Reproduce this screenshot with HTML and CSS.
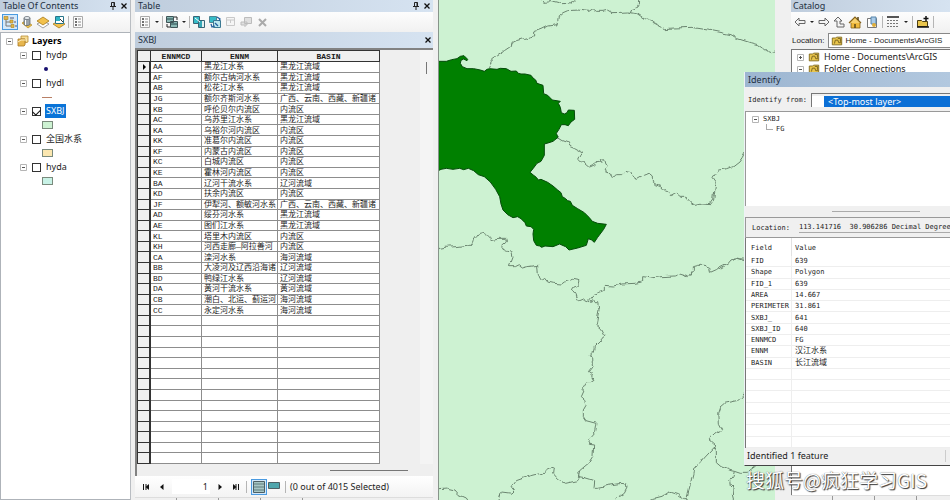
FILE: index.html
```html
<!DOCTYPE html>
<html lang="zh-CN">
<head>
<meta charset="utf-8">
<title>ArcMap</title>
<link rel="stylesheet" href="styles.css">
</head>
<body>
<svg class="defs" aria-hidden="true">
  <filter id="rough" x="0" y="0" width="100%" height="100%"><feTurbulence type="fractalNoise" baseFrequency=".04" numOctaves="2" seed="4"/><feDisplacementMap in="SourceGraphic" scale="16" xChannelSelector="R" yChannelSelector="G"/></filter>
  <symbol id="i-pin" viewBox="0 0 8 8"><path d="M2.5 .5h3v4h-3zM1 4.5h6M4 4.5V8M5 .5v4" fill="none" stroke="#222"/></symbol>
  <symbol id="i-x" viewBox="0 0 8 8"><path d="M1.5 1.5l5 5M6.500 1.500l-5 5" fill="none" stroke="#111" stroke-width="1.300"/></symbol>
  <symbol id="i-tree" viewBox="0 0 14 14"><path d="M3 4v7h5M3 7h5" fill="none" stroke="#777"/><path d="M1 1.500h4v3H1zM7 5h3v3H7zM8 9.500h3v3H8z" fill="#e3b444" stroke="#a98324" stroke-width=".6"/><path d="M7 3h4M11 7h2M12 11h2" stroke="#557"/></symbol>
  <symbol id="i-db" viewBox="0 0 14 14"><path d="M2 8l3-2 7 4-4 3z" fill="#efc34a" stroke="#b98d25" stroke-width=".7"/><path d="M4 3v6c0 2 6 2 6 0V3z" fill="#9aa3ab" stroke="#555d66" stroke-width=".7"/><ellipse cx="7" cy="3" rx="3" ry="1.500" fill="#e8edf1" stroke="#555d66" stroke-width=".7"/><path d="M5.500 5v5" stroke="#fff"/></symbol>
  <symbol id="i-diamond" viewBox="0 0 14 14"><path d="M1 9l6-3 6 3-6 4z" fill="#fff" stroke="#888" stroke-width=".8"/><path d="M1 6l6-4 6 4-6 4z" fill="#f2c14c" stroke="#a77a1c" stroke-width=".8"/></symbol>
  <symbol id="i-select" viewBox="0 0 14 14"><path d="M1 9l6-3 6 3-6 4z" fill="#f2c14c" stroke="#a77a1c" stroke-width=".8"/><path d="M3.500 1.500h8v7h-8z" fill="#fff" stroke="#28758a"/><path d="M4 2h4v4H4z" fill="#2fb3c4"/><path d="M8 4l3 3" stroke="#333"/></symbol>
  <symbol id="i-list" viewBox="0 0 14 14"><path d="M2.500 1.500h9v11h-9z" fill="#fbfbfb" stroke="#aaa"/><path d="M4 4h2M4 7h2M4 10h2" stroke="#444" stroke-width="1.500"/><path d="M7 4h3M7 7h3M7 10h3" stroke="#888"/></symbol>
  <symbol id="i-related" viewBox="0 0 14 14"><path d="M1.500 1.500h7v6h-7zM5.500 6.500h7v6h-7z" fill="#8ab9b5" stroke="#3f5558"/><path d="M2 4h6M6 9h6" stroke="#27464a"/><path d="M9 2h3v3M5 12H2V9" fill="none" stroke="#222"/></symbol>
  <symbol id="i-attr" viewBox="0 0 14 14"><path d="M1.500 1.500h6v7h-6z" fill="#36bcc8" stroke="#376476"/><path d="M6.500 5.500h6v7h-6z" fill="#e4f1f2" stroke="#376476"/><path d="M7 6h3v6H7z" fill="#36a9b8"/><path d="M3 3l5 4" stroke="#fff"/></symbol>
  <symbol id="i-switch" viewBox="0 0 14 14"><path d="M1.500 1.500h7v6h-7z" fill="#36bcc8" stroke="#4f8593"/><path d="M5.500 5.500h7v7h-7z" fill="#bde8ef" stroke="#3c7992"/><path d="M9 2l3 2-1 2M3 9l1 3 3-1M7 8l3 3" fill="none" stroke="#235fa0" stroke-width="1.300"/></symbol>
  <symbol id="i-clear" viewBox="0 0 14 14"><path d="M2.500 2.500h8v8h-8zM3 5h7M6.500 5v3" fill="#f5f5f5" stroke="#c9c9c9"/></symbol>
  <symbol id="i-zoomsel" viewBox="0 0 14 14"><path d="M4.500 2.500h7v6h-7zM1 7h6v3H1zM5 10v2" fill="#e0e0e0" stroke="#bcbcbc"/></symbol>
  <symbol id="i-del" viewBox="0 0 14 14"><path d="M3 4l7 7M10 4l-7 7" stroke="#aaa" stroke-width="2"/></symbol>
  <symbol id="i-first" viewBox="0 0 8 8"><path d="M1.500 1v6M4 1v6" stroke="#111"/><path d="M7 1v6L3.500 4z" fill="#111"/></symbol>
  <symbol id="i-prev" viewBox="0 0 8 8"><path d="M5.500 1v6L2 4z" fill="#111"/></symbol>
  <symbol id="i-all" viewBox="0 0 14 14"><path d="M1.500 1.500h11v11h-11z" fill="#a8c7c6" stroke="#4d6065"/><path d="M2 4h10M2 7h10M2 10h10" stroke="#5e7c7e"/></symbol>
  <symbol id="i-sel" viewBox="0 0 14 14"><path d="M1.500 2.500h11v6h-11z" fill="#4fa6ad" stroke="#4d6065"/></symbol>
  <symbol id="i-back" viewBox="0 0 12 12"><path d="M1 6l4-4v2.500h6v3H5V10z" fill="#f4f4f4" stroke="#666"/></symbol>
  <symbol id="i-up" viewBox="0 0 12 12"><path d="M5 1l4 4H7v3h4v3H4V5H1z" fill="#f4f4f4" stroke="#666"/></symbol>
  <symbol id="i-home" viewBox="0 0 14 14"><path d="M3 7h9v6H3z" fill="#efb93c" stroke="#84611a" stroke-width=".8"/><path d="M1 8l6-6 6 6" fill="#f6d06e" stroke="#84611a" stroke-width="1.200"/><path d="M10 2v3M7 9v4" stroke="#5b4515" stroke-width="1.500"/></symbol>
  <symbol id="i-doc" viewBox="0 0 14 14"><path d="M2.500 3.500h9v9h-9z" fill="#fff" stroke="#777"/><path d="M6 4V2h5v7H6z" fill="#a9cbe9" stroke="#5784aa"/><circle cx="9" cy="10" r="2" fill="#dfae39"/></symbol>
  <symbol id="i-grid" viewBox="0 0 14 14"><path d="M1 2h12" stroke="#555" stroke-width="2"/><path d="M1 5.500h12M1 8.500h12M1 11.500h12" stroke="#777" stroke-dasharray="2 1"/></symbol>
  <symbol id="i-folder" viewBox="0 0 14 12"><path d="M1.500 2.500h4l1-1h6v9h-11z" fill="#e9c54c" stroke="#7b6316"/><path d="M4 9l1-4h3l1 3h3M8 3h3v4" fill="none" stroke="#6c5818"/></symbol>
  <symbol id="i-connect" viewBox="0 0 14 12"><path d="M1.500 4.500h4l1 1h5v5h-10z" fill="#e9c54c" stroke="#4d3f11"/><path d="M10 0v5M7.500 2.500h5M1 11h12" stroke="#111" stroke-width="1.500"/></symbol>
  <symbol id="i-layers" viewBox="0 0 12 12"><path d="M4 1h7v6l-3 1V4H4z" fill="#f7dc92" stroke="#b78a33" stroke-width=".8"/><path d="M1 4h7v6l-1 1H1z" fill="#e7b64e" stroke="#a97925" stroke-width=".8"/><path d="M1 7l3-2h6" fill="none" stroke="#fff1c8"/></symbol>
  <symbol id="i-minus" viewBox="0 0 7 7"><path d="M.5.5h6v6h-6z" fill="#fff" stroke="#b5b5b5"/><path d="M2 3.500h3" stroke="#555"/></symbol>
  <symbol id="i-plus" viewBox="0 0 7 7"><path d="M.5.5h6v6h-6z" fill="#fff" stroke="#b5b5b5"/><path d="M2 3.500h3M3.500 2v3" stroke="#555"/></symbol>
</svg>

<main class="workspace">
  <aside class="toc">
    <header class="title"><h2>Table Of Contents</h2><button aria-label="Auto hide"><svg class="i8"><use href="#i-pin"/></svg></button><button aria-label="Close"><svg class="i8"><use href="#i-x"/></svg></button></header>
    <div class="toolbar">
      <button class="active" aria-label="List by drawing order"><svg class="i14"><use href="#i-tree"/></svg></button>
      <button aria-label="List by source"><svg class="i14"><use href="#i-db"/></svg></button>
      <button aria-label="List by visibility"><svg class="i14"><use href="#i-diamond"/></svg></button>
      <button aria-label="List by selection"><svg class="i14"><use href="#i-select"/></svg></button>
      <i class="sep"></i>
      <button aria-label="Options"><svg class="i14"><use href="#i-list"/></svg></button>
    </div>
    <div class="tree">
      <div class="root"><svg class="i7"><use href="#i-minus"/></svg><svg class="i12"><use href="#i-layers"/></svg><b>Layers</b></div>
      <ul>
        <li><div class="layer"><svg class="i7"><use href="#i-minus"/></svg><input type="checkbox" id="l1"><label for="l1">hydp</label></div><span class="sym point"></span></li>
        <li><div class="layer"><svg class="i7"><use href="#i-minus"/></svg><input type="checkbox" id="l2"><label for="l2">hydl</label></div><span class="sym line"></span></li>
        <li><div class="layer"><svg class="i7"><use href="#i-minus"/></svg><input type="checkbox" id="l3" checked><label for="l3" class="selected">SXBJ</label></div><span class="sym green"></span></li>
        <li><div class="layer"><svg class="i7"><use href="#i-minus"/></svg><input type="checkbox" id="l4"><label for="l4">全国水系</label></div><span class="sym yellow"></span></li>
        <li><div class="layer"><svg class="i7"><use href="#i-minus"/></svg><input type="checkbox" id="l5"><label for="l5">hyda</label></div><span class="sym cyan"></span></li>
      </ul>
    </div>
  </aside>

  <section class="attributes">
    <header class="title"><h2>Table</h2><button aria-label="Auto hide"><svg class="i8"><use href="#i-pin"/></svg></button><button aria-label="Close"><svg class="i8"><use href="#i-x"/></svg></button></header>
    <div class="toolbar">
      <button aria-label="Table options"><svg class="i14"><use href="#i-list"/></svg></button><i class="drop"></i><i class="sep"></i>
      <button aria-label="Related tables"><svg class="i14"><use href="#i-related"/></svg></button><i class="drop"></i><i class="sep"></i>
      <button aria-label="Select by attributes"><svg class="i14"><use href="#i-attr"/></svg></button>
      <button aria-label="Switch selection"><svg class="i14"><use href="#i-switch"/></svg></button>
      <button aria-label="Clear selection" disabled><svg class="i14"><use href="#i-clear"/></svg></button>
      <button aria-label="Zoom to selected" disabled><svg class="i14"><use href="#i-zoomsel"/></svg></button>
      <button aria-label="Delete selected" disabled><svg class="i14"><use href="#i-del"/></svg></button>
    </div>
    <header class="title sub"><h2>SXBJ</h2><button aria-label="Close SXBJ"><svg class="i8"><use href="#i-x"/></svg></button></header>
    <div class="sheet">
      <div class="sheet-table">
        <table class="records">
          <colgroup><col class="c0"><col class="c1"><col class="c2"><col class="c3"></colgroup>
          <thead><tr><th></th><th>ENNMCD</th><th>ENNM</th><th>BASIN</th></tr></thead>
          <tbody>
            <tr><th class="current"></th><td>AA</td><td>黑龙江水系</td><td>黑龙江流域</td></tr>
            <tr><th></th><td>AF</td><td>额尔古纳河水系</td><td>黑龙江流域</td></tr>
            <tr><th></th><td>AB</td><td>松花江水系</td><td>黑龙江流域</td></tr>
            <tr><th></th><td>JG</td><td>额尔齐斯河水系</td><td>广西、云南、西藏、新疆诸</td></tr>
            <tr><th></th><td>KB</td><td>呼伦贝尔内流区</td><td>内流区</td></tr>
            <tr><th></th><td>AC</td><td>乌苏里江水系</td><td>黑龙江流域</td></tr>
            <tr><th></th><td>KA</td><td>乌裕尔河内流区</td><td>内流区</td></tr>
            <tr><th></th><td>KK</td><td>准葛尔内流区</td><td>内流区</td></tr>
            <tr><th></th><td>KF</td><td>内蒙古内流区</td><td>内流区</td></tr>
            <tr><th></th><td>KC</td><td>白城内流区</td><td>内流区</td></tr>
            <tr><th></th><td>KE</td><td>霍林河内流区</td><td>内流区</td></tr>
            <tr><th></th><td>BA</td><td>辽河干流水系</td><td>辽河流域</td></tr>
            <tr><th></th><td>KD</td><td>扶余内流区</td><td>内流区</td></tr>
            <tr><th></th><td>JF</td><td>伊犁河、额敏河水系</td><td>广西、云南、西藏、新疆诸</td></tr>
            <tr><th></th><td>AD</td><td>绥芬河水系</td><td>黑龙江流域</td></tr>
            <tr><th></th><td>AE</td><td>图们江水系</td><td>黑龙江流域</td></tr>
            <tr><th></th><td>KL</td><td>塔里木内流区</td><td>内流区</td></tr>
            <tr><th></th><td>KH</td><td>河西走廊—阿拉善河</td><td>内流区</td></tr>
            <tr><th></th><td>CA</td><td>滦河水系</td><td>海河流域</td></tr>
            <tr><th></th><td>BB</td><td>大凌河及辽西沿海诸</td><td>辽河流域</td></tr>
            <tr><th></th><td>BD</td><td>鸭绿江水系</td><td>辽河流域</td></tr>
            <tr><th></th><td>DA</td><td>黄河干流水系</td><td>黄河流域</td></tr>
            <tr><th></th><td>CB</td><td>潮白、北运、蓟运河</td><td>海河流域</td></tr>
            <tr><th></th><td>CC</td><td>永定河水系</td><td>海河流域</td></tr>
            <tr><th></th><td></td><td></td><td></td></tr>
            <tr><th></th><td></td><td></td><td></td></tr>
            <tr><th></th><td></td><td></td><td></td></tr>
            <tr><th></th><td></td><td></td><td></td></tr>
            <tr><th></th><td></td><td></td><td></td></tr>
            <tr><th></th><td></td><td></td><td></td></tr>
            <tr><th></th><td></td><td></td><td></td></tr>
            <tr><th></th><td></td><td></td><td></td></tr>
            <tr><th></th><td></td><td></td><td></td></tr>
            <tr><th></th><td></td><td></td><td></td></tr>
            <tr><th></th><td></td><td></td><td></td></tr>
            <tr><th></th><td></td><td></td><td></td></tr>
            <tr><th></th><td></td><td></td><td></td></tr>
            <tr><th></th><td></td><td></td><td></td></tr>
          </tbody>
        </table>
      </div>
      <div class="vscroll"><i></i></div>
      <div class="hscroll"><i></i></div>
    </div>
    <footer class="nav">
      <button aria-label="First record"><svg class="i8"><use href="#i-first"/></svg></button>
      <button aria-label="Previous record"><svg class="i8"><use href="#i-prev"/></svg></button>
      <input type="text" value="1" aria-label="Record number">
      <button class="flip" aria-label="Next record"><svg class="i8"><use href="#i-prev"/></svg></button>
      <button class="flip" aria-label="Last record"><svg class="i8"><use href="#i-first"/></svg></button>
      <i class="sep"></i>
      <span class="views">
        <button class="active" aria-label="Show all records"><svg class="i14"><use href="#i-all"/></svg></button>
        <button aria-label="Show selected records"><svg class="i14"><use href="#i-sel"/></svg></button>
      </span>
      <i class="sep"></i>
      <span>(0 out of 4015 Selected)</span>
    </footer>
    <div class="tabs"><i></i><i></i><i></i><i></i></div>
  </section>

  <section class="map" aria-label="Map">
    <svg viewBox="24 0 1011 1500" preserveAspectRatio="xMinYMin slice">
      <g class="bounds" filter="url(#rough)">
        <path d="M333 0 338 7 360 5 378 9 396 14 412 13 424 8 434 0M623 0 622 14 616 24 604 28 596 33 600 40"/>
        <path d="M175 205 184 184 182 176 200 164 220 152 238 140 240 130 256 122 290 112 308 108 308 96 330 88 350 78 378 74 382 50 396 38 410 32 440 30 474 34 486 26 496 34 516 34 532 30 546 38 590 36 598 38 620 42 640 56 664 66 700 86 730 84 780 82 830 90 900 104 920 116 958 128 980 134 1004 152 1018 158 1035 152"/>
        <path d="M380 412 396 422 412 428 416 438 434 446 452 456 446 464 440 478 450 488 460 490 474 502 492 494 498 488 510 486 508 478 518 476 522 490 532 496 526 508 530 522 544 532 560 524 572 524 580 514 602 518 610 534 620 538 640 526 654 520 664 528 664 544 676 554 692 560 702 572 712 576 718 590 736 580 750 592 766 592 778 606 792 616 810 612 838 614 848 600 850 580 856 546 846 532 862 510 890 506 906 500 924 486 934 472 940 460 944 452"/>
        <path d="M24 746 50 741 74 740 106 736 122 736 126 722 140 702 152 699 166 702 176 712 180 722 204 718 224 718 226 726 214 736 212 748 226 754 242 756 246 772 240 788 235 800 250 800 262 794 274 804 290 800 304 798 320 796 322 828 328 838 340 834 350 846 368 850 392 852 400 846 408 844 424 838 444 842 440 856 428 862 424 870 432 880 438 898 446 902 456 898 462 904 470 900 476 904 484 898 490 908 500 908 504 930 500 950 496 972 512 986 522 1005 508 1022 490 1040 486 1058 478 1066 486 1080 480 1092 486 1100 472 1118 482 1124 486 1138 468 1150 458 1168 448 1190 464 1204 468 1216 460 1230 460 1250 468 1262 498 1270 494 1294 480 1310 472 1330 488 1332 486 1368 472 1390 446 1412 442 1430"/>
        <path d="M473 900 486 884 520 872 520 856 544 858 570 852 612 850 632 846 632 830 666 834 690 830 730 828 746 822 772 830 784 812 784 800 800 796 822 796 836 802 838 820 856 812 870 802 890 792 900 780 914 774 940 782 950 780"/>
        <path d="M24 1466 46 1464 72 1470 84 1484 106 1494 110 1500M204 1500 212 1476 242 1480 250 1472 242 1462 256 1442 290 1430 330 1420 346 1410 362 1402 370 1404 368 1422 380 1436 404 1450 440 1442 446 1430 440 1418 446 1412M442 1430 456 1432 476 1438 488 1442 486 1462 500 1462 530 1456 570 1450 586 1452 588 1464 580 1480 560 1494 552 1500M658 1500 690 1492 714 1476 740 1484 760 1498 768 1500"/>
        <path d="M768 1500 774 1466 786 1420 788 1402 808 1390 820 1374 848 1344 858 1338 840 1322 838 1312 856 1296 864 1298 872 1288 862 1270 860 1240 866 1222 880 1210 920 1202 932 1192 940 1180 946 1176M849 1343 856 1352 856 1388 870 1400 900 1412 910 1414 928 1420 946 1420 960 1408 974 1398M910 1414 906 1430 896 1442 898 1456 906 1464 904 1484 908 1500M905 778 912 773 926 776 944 778"/>
      </g>
      <path class="basin" d="M18 184 46 184 62 179 78 176 88 169 99 167 110 178 108 182 98 177 90 181 88 190 94 200 108 206 128 206 148 210 160 214 168 208 176 206 198 208 208 205 226 206 240 214 256 213 262 220 270 222 282 222 300 226 306 234 314 240 318 250 336 256 338 281 350 286 356 292 364 300 388 304 382 310 388 322 391 338 400 342 408 338 412 330 430 331 431 358 420 366 412 377 402 374 391 374 384 388 376 400 381 412 366 424 354 428 340 432 340 466 330 484 318 490 306 506 297 517 308 526 316 532 322 540 330 538 350 547 366 558 380 570 390 578 394 590 404 596 410 602 418 604 424 616 440 626 460 638 474 652 484 664 500 670 526 673 518 688 500 712 490 727 482 720 472 716 466 736 440 744 414 750 404 740 390 734 386 732 366 740 342 738 332 742 326 738 316 736 308 722 306 702 308 688 300 680 286 678 282 668 270 656 260 650 246 653 230 644 216 630 210 612 206 590 194 568 178 546 160 530 142 524 128 512 112 505 98 509 86 505 66 508 46 505 30 508 18 514z"/>
    </svg>
  </section>

  <aside class="catalog">
    <header class="title"><h2>Catalog</h2></header>
    <div class="toolbar">
      <button aria-label="Back"><svg class="i12"><use href="#i-back"/></svg></button><i class="drop"></i>
      <button class="flip" aria-label="Forward"><svg class="i12"><use href="#i-back"/></svg></button>
      <button aria-label="Up one level"><svg class="i12"><use href="#i-up"/></svg></button>
      <button aria-label="Home"><svg class="i14"><use href="#i-home"/></svg></button>
      <button aria-label="Default geodatabase"><svg class="i14"><use href="#i-doc"/></svg></button><i class="sep"></i>
      <button aria-label="Contents view"><svg class="i14"><use href="#i-grid"/></svg></button><i class="drop"></i><i class="sep"></i>
      <button aria-label="Connect to folder"><svg class="i14"><use href="#i-connect"/></svg></button><i class="sep"></i>
    </div>
    <div class="location"><label for="loc">Location:</label><div class="combo"><svg class="i12"><use href="#i-folder"/></svg><select id="loc"><option>Home - Documents\ArcGIS</option></select></div></div>
    <ul class="folders">
      <li><svg class="i7"><use href="#i-plus"/></svg><svg class="i12"><use href="#i-folder"/></svg>Home - Documents\ArcGIS</li>
      <li><svg class="i7"><use href="#i-minus"/></svg><svg class="i12"><use href="#i-folder"/></svg>Folder Connections</li>
    </ul>
    <div class="tabs"><i></i><i></i><i></i></div>
  </aside>

  <section class="identify">
    <header class="title"><h2>Identify</h2></header>
    <div class="from"><label for="from">Identify from:</label><select id="from"><option>&lt;Top-most layer&gt;</option></select></div>
    <div class="results"><div><svg class="i7"><use href="#i-minus"/></svg>SXBJ</div><div class="child"><i></i>FG</div></div>
    <div class="split"><i></i></div>
    <div class="coords"><label for="xy">Location:</label><input id="xy" type="text" readonly value="113.141716  30.906286 Decimal Degrees"></div>
    <div class="fields">
      <table>
        <thead><tr><th>Field</th><th>Value</th></tr></thead>
        <tbody>
          <tr><td>FID</td><td>639</td></tr>
          <tr><td>Shape</td><td>Polygon</td></tr>
          <tr><td>FID_1</td><td>639</td></tr>
          <tr><td>AREA</td><td>14.667</td></tr>
          <tr><td>PERIMETER</td><td>31.861</td></tr>
          <tr><td>SXBJ_</td><td>641</td></tr>
          <tr><td>SXBJ_ID</td><td>640</td></tr>
          <tr><td>ENNMCD</td><td>FG</td></tr>
          <tr><td>ENNM</td><td class="cjk">汉江水系</td></tr>
          <tr><td>BASIN</td><td class="cjk">长江流域</td></tr>
          <tr><td></td><td></td></tr>
          <tr><td></td><td></td></tr>
          <tr><td></td><td></td></tr>
          <tr><td></td><td></td></tr>
          <tr><td></td><td></td></tr>
          <tr><td></td><td></td></tr>
          <tr><td></td><td></td></tr>
        </tbody>
      </table>
    </div>
    <footer>Identified 1 feature<i></i></footer>
  </section>
  <p class="watermark">搜狐号@疯狂学习GIS</p>
</main>
</body>
</html>
```
FILE: styles.css
```css
* { box-sizing: border-box; }
body {
  margin: 0;
  background: #f0f0f0;
  color: #1c1c1c;
  font: 9px/12px "Noto Sans", "Noto Sans CJK SC", sans-serif;
}
h2, p, ul { margin: 0; padding: 0; font: inherit; list-style: none; }
button { display: grid; place-items: center; padding: 0; border: 0; background: none; flex: none; }
input, select { font: inherit; color: inherit; margin: 0; border-radius: 0; }
svg { display: block; flex: none; }
.defs { width: 0; height: 0; position: absolute; }
.i7 { width: 7px; height: 7px; }
.i8 { width: 8px; height: 8px; }
.i12 { width: 12px; height: 12px; }
.i14 { width: 14px; height: 14px; }
.flip { transform: scaleX(-1); }

.workspace {
  position: relative;
  display: grid;
  grid-template-columns: 131px 308px minmax(0, 1fr) 175px;
  grid-template-rows: 100vh;
  overflow: hidden;
}
.workspace > * { min-width: 0; min-height: 0; }

.title {
  display: flex;
  align-items: center;
  flex: none;
  gap: 3px;
  height: 12px;
  padding: 0 2px 0 3px;
  background: linear-gradient(90deg, #bfcddd, #d6e3f1);
  color: #222f3f;
}
.title h2 { flex: 1; white-space: nowrap; }
.title.sub { height: 16px; padding-right: 1px; }

.toolbar {
  display: flex;
  align-items: center;
  flex: none;
  gap: 2px;
  height: 20px;
  padding: 0 2px;
  background: linear-gradient(#fdfdfd, #f1f1f1);
}
.toolbar button { height: 16px; }
.active { background: #d3e8fa; outline: 1px solid #4a9ae0; outline-offset: -1px; width: 16px; }
.sep { flex: none; width: 1px; height: 12px; background: #b5b5b5; }
.drop { flex: none; border: 2px solid transparent; border-top-color: #222; border-bottom: 0; margin: 0 1px; }

.toc { display: flex; flex-direction: column; border-right: 1px solid #b9bdc2; }
.tree { flex: 1; background: #fff; border: 1px solid #aeb3b9; border-right: 0; padding: 1px 0 0 5px; }
.root, .layer { display: flex; align-items: center; height: 14px; }
.root { gap: 4px; }
.root b { margin-left: -1px; color: #000; }
.tree ul { padding-left: 14px; }
.layer { gap: 5px; }
.layer input { appearance: none; width: 9px; height: 9px; border: 1px solid #333; background: #fff; display: grid; place-items: center; }
.layer input:checked::before { content: ""; width: 6px; height: 4px; border: solid #111; border-width: 0 0 1px 1px; transform: rotate(-45deg); }
.layer label { margin-left: -1px; padding: 0 1px; }
.layer .selected { background: #0a74d8; color: #fff; height: 14px; line-height: 14px; }
.tree li { height: 28px; }
.sym { display: block; width: 11px; height: 8px; margin: 3px 0 0 22px; border: 1px solid #7a8a7c; }
.point { width: 4px; height: 4px; margin: 5px 0 0 24px; border: 0; border-radius: 50%; background: #18106f; }
.line { width: 10px; height: 1px; margin-top: 7px; border: 0; background: #b98066; }
.green { background: #cdf2d2; }
.yellow { background: #fbe7b0; }
.cyan { background: #c8f2e6; }

.attributes { display: flex; flex-direction: column; padding: 0 5px 0 4px; border-right: 1px solid #87948a; }
.attributes .toolbar { padding: 0 3px; }
.sheet {
  flex: 1;
  min-height: 0;
  display: grid;
  grid-template: minmax(0, 1fr) 12px / minmax(0, 1fr) 13px;
  border: solid #828282;
  border-width: 2px 0 0 2px;
  background: #efefef;
}
.sheet-table { min-height: 0; overflow: hidden; }
.records { width: 243px; height: 100%; border-spacing: 0; table-layout: fixed; font: 8px/9px "Liberation Mono", "Noto Sans CJK SC", monospace; }
.c0 { width: 14px; }
.c1 { width: 51px; }
.c2 { width: 76px; }
.c3 { width: 102px; }
.records tr { height: 10px; }
.records th, .records td { height: 10px; }
.records th { padding: 0; background: #f0f0f0; border: solid #333; border-width: 0 2px 1px 1px; }
.records thead th { height: 12px; border-width: 1px 1px 1px 0; }
.records thead th:first-child { border-width: 1px; }
.records td { padding: 0 0 0 2px; background: #fff; border: solid #8d8d8d; border-width: 0 1px 1px 0; white-space: nowrap; overflow: hidden; }
.records .current::before { content: ""; display: block; width: 0; margin-left: 5px; border: 3px solid transparent; border-left-color: #000; border-right: 0; }
.vscroll { background: #f4f4f4; display: flex; justify-content: center; padding-top: 12px; }
.vscroll i { width: 1px; height: 12px; background: #777; }
.hscroll { grid-column: 1 / -1; display: flex; justify-content: flex-end; align-items: center; padding-right: 25px; }
.hscroll i { width: 78px; height: 1px; background: #777; }
.nav { display: flex; align-items: center; gap: 4px; height: 21px; flex: none; padding-left: 5px; background: linear-gradient(#fff, #f3f3f3); }
.nav button { min-width: 12px; }
.nav .active { height: 16px; width: 16px; }
.nav input { width: 38px; height: 15px; padding: 0 2px; border: 0; text-align: right; background: #fff; }
.nav span { white-space: nowrap; }
.views { display: flex; align-items: center; }
.tabs { display: flex; flex: none; height: 3px; border-top: 1px solid #ddd; }
.tabs i { width: 28px; margin-left: 14px; border-right: 1px solid #999; }

.map { background: #cdf2d2; overflow: hidden; }
.map svg { width: 100%; height: 100%; }
.bounds { fill: none; stroke: #6b8570; stroke-width: 3; stroke-linejoin: round; }
.basin { fill: #008000; stroke: #064b0b; stroke-width: 3; }

.catalog { display: flex; flex-direction: column; padding-left: 16px; }
.catalog .title { padding-left: 2px; }
.catalog .toolbar { gap: 3px; padding: 0 3px; }
.location { display: flex; align-items: center; gap: 4px; height: 17px; flex: none; padding-left: 1px; font: 8px/12px "Liberation Sans", sans-serif; white-space: nowrap; }
.combo { flex: 1; display: flex; align-items: center; gap: 2px; height: 15px; padding-left: 2px; background: #fff; border: 1px solid #888; border-right: 0; }
.combo select { flex: 1; appearance: none; border: 0; padding: 0; background: none; }
.folders { flex: 1; background: #fff; border: solid #777; border-width: 1px 0 0 1px; padding: 1px 0 0 5px; }
.folders li { display: flex; align-items: center; gap: 4px; height: 12px; white-space: nowrap; }
.catalog .tabs { height: 5px; }

.identify {
  position: absolute;
  top: 72px;
  right: 0;
  bottom: 34px;
  width: 206px;
  display: flex;
  flex-direction: column;
  background: #f0f0f0;
  border-left: 1px solid #eef2f6;
  border-bottom: 1px solid #444;
  font: 7px/10px "DejaVu Sans Mono", "Noto Sans CJK SC", monospace;
}
.identify .title { height: 15px; background: linear-gradient(90deg, #9db6d1, #b2c8df); font: 9px/12px "Noto Sans", sans-serif; }
.from { display: flex; align-items: center; height: 24px; gap: 4px; padding: 2px 0 0 3px; flex: none; white-space: nowrap; }
.from select {
  appearance: none;
  flex: 1;
  height: 14px;
  padding: 2px 0 0 16px;
  border: solid #777;
  border-width: 1px 0 0 1px;
  background: linear-gradient(90deg, #fff 12px, #0b6fd6 12px) 0 2px no-repeat;
  color: #fff;
  font: 9px/11px "Noto Sans", sans-serif;
}
.results { flex: none; height: 95px; padding: 2px 0 0 6px; background: #fff; border: solid #999; border-width: 1px 0 0 1px; }
.results div { display: flex; align-items: center; gap: 4px; }
.results .child { padding-left: 14px; gap: 3px; }
.child i { width: 7px; height: 6px; margin-bottom: 4px; border: solid #aaa; border-width: 0 0 1px 1px; }
.split { flex: none; height: 11px; display: grid; place-items: center; }
.split i { width: 88px; height: 1px; margin-left: 57px; background: #aaa; }
.coords { flex: none; display: flex; align-items: center; height: 21px; gap: 9px; padding-left: 6px; border: solid #999; border-width: 1px 0 1px 1px; }
.coords input { flex: 1; min-width: 0; padding: 0; border: 0; border-bottom: 1px solid #aaa; background: none; }
.fields { flex: 1; min-height: 0; border-left: 1px solid #777; background: #fff; overflow: hidden; }
.fields table { width: 100%; height: 100%; table-layout: fixed; border-spacing: 0; }
.fields th { height: 18px; width: 46px; padding: 1px 0 0 5px; font-weight: normal; text-align: left; border-right: 1px solid #e2e2e2; }
.fields td { height: 11px; padding: 0 0 0 5px; border: solid #eee; border-width: 0 1px 1px 0; white-space: nowrap; }
.fields th + th, .fields td + td { width: auto; padding-left: 3px; border-right: 0; }
.fields .cjk { font-size: 8px; }
.identify footer { flex: none; display: flex; justify-content: space-between; height: 17px; padding: 0 4px 0 2px; font: 9px/16px "Noto Sans", sans-serif; }
.identify footer i { width: 1px; height: 12px; margin-top: 2px; background: #ccc; }

.watermark {
  position: absolute;
  right: 23px;
  bottom: 8px;
  color: #fff;
  font: 19px/24px "Noto Sans CJK SC", sans-serif;
  text-shadow: 1px 1px 1px #333, 0 0 1px #555;
  white-space: nowrap;
}
```
